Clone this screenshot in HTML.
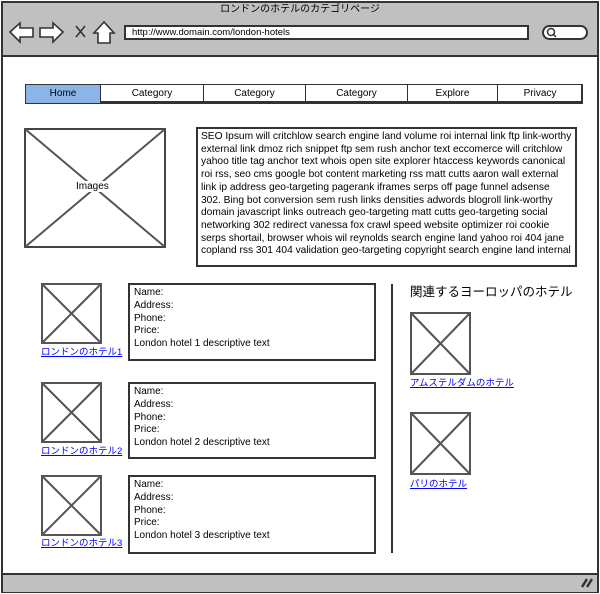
<!DOCTYPE html><html><head><meta charset="utf-8"><style>
*{margin:0;padding:0;box-sizing:border-box}
body{width:600px;height:594px;background:#fff;position:relative;overflow:hidden;font-family:"Liberation Sans","Noto Sans CJK JP",sans-serif;color:#000}
.a{position:absolute}
.box{position:absolute;border:2px solid #333;background:#fff}
.t{font-size:10px;line-height:12.8px}
a{color:#00f;text-decoration:underline;font-size:9.5px;position:absolute;white-space:nowrap}
.nav div{position:absolute;top:0;height:18px;border-right:1px solid #333;font-size:10px;text-align:center;line-height:17px}
</style></head><body>
<div class="a" style="left:1px;top:1px;width:598px;height:592px;border:2px solid #333"></div>
<div class="a" style="left:3px;top:3px;width:594px;height:54px;background:#c0c0c0;border-bottom:2px solid #333"></div>
<div class="a t" style="left:0;width:600px;top:4px;text-align:center;font-size:10px">ロンドンのホテルのカテゴリページ</div>
<svg class="a" style="left:8px;top:20px" width="110" height="26" viewBox="0 0 110 26" fill="#fff" stroke="#333" stroke-width="1.6">
<path d="M2 12 L12 3 L12 8 L25 8 L25 17 L12 17 L12 22 Z"/>
<path d="M55 12 L45 3 L45 8 L32 8 L32 17 L45 17 L45 22 Z"/>
<path d="M68 6 L77 17 M77 6 L68 17" fill="none"/>
<path d="M96 2 L86 13 L90 13 L90 23 L102 23 L102 13 L106 13 Z"/>
</svg>
<div class="box" style="left:124px;top:25px;width:405px;height:15px;font-size:9.5px;line-height:11px;padding-left:6px">http://www.domain.com/london-hotels</div>
<div class="a" style="left:542px;top:25px;width:46px;height:15px;border:2px solid #333;border-radius:8px;background:#fff"></div>
<svg class="a" style="left:546px;top:27px" width="12" height="12"><circle cx="5" cy="5" r="3.5" fill="none" stroke="#333" stroke-width="1.5"/><path d="M7 7 L10 10" stroke="#333" stroke-width="1.5"/></svg>
<div class="a nav" style="left:25px;top:84px;width:558px;height:20px;border:1px solid #333;border-bottom:3px solid #333;border-right:2px solid #333">
<div style="left:0;width:75px;background:#8db4e8">Home</div>
<div style="left:75px;width:103px">Category</div>
<div style="left:178px;width:102px">Category</div>
<div style="left:280px;width:102px">Category</div>
<div style="left:382px;width:90px">Explore</div>
<div style="left:472px;width:84px;border:none">Privacy</div>
</div>
<svg class="a" style="left:24px;top:128px" width="142" height="120"><rect x="1" y="1" width="140" height="118" fill="#fff" stroke="#444" stroke-width="2"/><path d="M1 1L141 119M141 1L1 119" stroke="#555" stroke-width="2"/></svg>
<div class="a" style="left:74px;top:181px;background:#fff;font-size:10px;padding:0 2px">Images</div>
<div class="box t" style="left:196px;top:127px;width:381px;height:140px;padding:2px 3px;font-size:10.2px;line-height:12.7px;white-space:nowrap;overflow:hidden">SEO Ipsum will critchlow search engine land volume roi internal link ftp link-worthy<br>external link dmoz rich snippet ftp sem rush anchor text eccomerce will critchlow<br>yahoo title tag anchor text whois open site explorer htaccess keywords canonical<br>roi rss, seo cms google bot content marketing rss matt cutts aaron wall external<br>link ip address geo-targeting pagerank iframes serps off page funnel adsense<br>302. Bing bot conversion sem rush links densities adwords blogroll link-worthy<br>domain javascript links outreach geo-targeting matt cutts geo-targeting social<br>networking 302 redirect vanessa fox crawl speed website optimizer roi cookie<br>serps shortail, browser whois wil reynolds search engine land yahoo roi 404 jane<br>copland rss 301 404 validation geo-targeting copyright search engine land internal</div>

<svg class="a" style="left:41px;top:283px" width="61" height="61"><rect x="1" y="1" width="59" height="59" fill="#fff" stroke="#555" stroke-width="2"/><path d="M1 1L60 60M60 1L1 60" stroke="#555" stroke-width="2"/></svg>
<a style="left:41px;top:344px">ロンドンのホテル1</a>
<div class="box t" style="left:128px;top:283px;width:248px;height:78px;padding:2px 4px">Name:<br>Address:<br>Phone:<br>Price:<br>London hotel 1 descriptive text</div>

<svg class="a" style="left:41px;top:382px" width="61" height="61"><rect x="1" y="1" width="59" height="59" fill="#fff" stroke="#555" stroke-width="2"/><path d="M1 1L60 60M60 1L1 60" stroke="#555" stroke-width="2"/></svg>
<a style="left:41px;top:443px">ロンドンのホテル2</a>
<div class="box t" style="left:128px;top:382px;width:248px;height:77px;padding:2px 4px">Name:<br>Address:<br>Phone:<br>Price:<br>London hotel 2 descriptive text</div>

<svg class="a" style="left:41px;top:475px" width="61" height="61"><rect x="1" y="1" width="59" height="59" fill="#fff" stroke="#555" stroke-width="2"/><path d="M1 1L60 60M60 1L1 60" stroke="#555" stroke-width="2"/></svg>
<a style="left:41px;top:535px">ロンドンのホテル3</a>
<div class="box t" style="left:128px;top:475px;width:248px;height:79px;padding:2px 4px">Name:<br>Address:<br>Phone:<br>Price:<br>London hotel 3 descriptive text</div>

<div class="a" style="left:391px;top:284px;width:2px;height:269px;background:#333"></div>
<div class="a" style="left:410px;top:281px;font-size:12.5px">関連するヨーロッパのホテル</div>
<svg class="a" style="left:410px;top:312px" width="61" height="63"><rect x="1" y="1" width="59" height="61" fill="#fff" stroke="#555" stroke-width="2"/><path d="M1 1L60 62M60 1L1 62" stroke="#555" stroke-width="2"/></svg>
<a style="left:410px;top:375px">アムステルダムのホテル</a>
<svg class="a" style="left:410px;top:412px" width="61" height="63"><rect x="1" y="1" width="59" height="61" fill="#fff" stroke="#555" stroke-width="2"/><path d="M1 1L60 62M60 1L1 62" stroke="#555" stroke-width="2"/></svg>
<a style="left:410px;top:476px">パリのホテル</a>

<div class="a" style="left:3px;top:573px;width:594px;height:19px;background:#c0c0c0;border-top:2px solid #333"></div>
<svg class="a" style="left:580px;top:577px" width="14" height="12"><path d="M2 10L7 2M7 10L12 2" stroke="#333" stroke-width="2.5"/></svg>
</body></html>
